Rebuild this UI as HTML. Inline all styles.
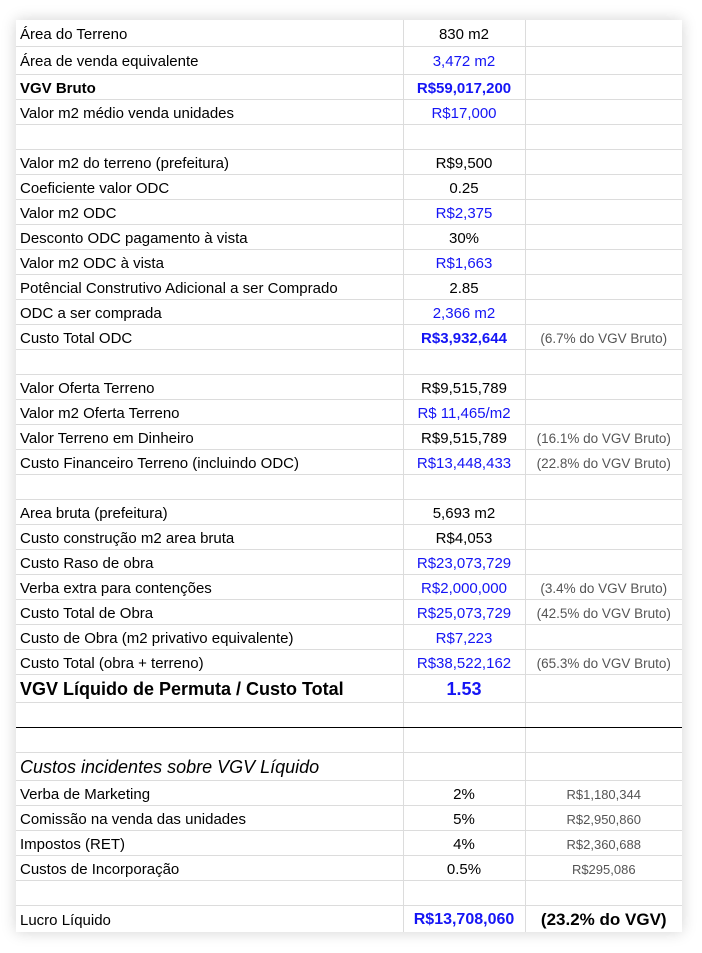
<!DOCTYPE html>
<html><head><meta charset="utf-8"><style>
body{margin:0;background:#fff;width:702px;height:953px;overflow:hidden;font-family:"Liberation Sans",sans-serif;}
.wrap{position:absolute;left:16px;top:20px;width:666px;box-shadow:0 0 14px rgba(0,0,0,0.18);background:#fff;}
table{border-collapse:collapse;width:666px;table-layout:fixed;}
td{border:1px solid #dcdcdc;height:22px;padding:2px 0 0 0;font-size:15px;color:#000;white-space:nowrap;overflow:visible;}
td:first-child{border-left:none;padding-left:4px;}
td:last-child{border-right:none;}
tr:first-child td{border-top:none;}
tr:last-child td{border-bottom:none;}
td.c{text-align:center;}
.b{color:#1515f5;}
.bb{color:#1515f5;font-weight:bold;}
.g{color:#555;font-size:13.5px;text-align:center;}
.gs{color:#555;font-size:13px;text-align:center;}
</style></head><body><div class="wrap"><table>
<colgroup><col style="width:387px"><col style="width:122px"><col style="width:157px"></colgroup>
<tr><td style="height:24px">Área do Terreno</td><td class="c">830 m2</td><td></td></tr>
<tr><td style="height:25px">Área de venda equivalente</td><td class="c b">3,472 m2</td><td></td></tr>
<tr><td><b>VGV Bruto</b></td><td class="c bb">R$59,017,200</td><td></td></tr>
<tr><td>Valor m2 médio venda unidades</td><td class="c b">R$17,000</td><td></td></tr>
<tr><td></td><td></td><td></td></tr>
<tr><td>Valor m2 do terreno (prefeitura)</td><td class="c">R$9,500</td><td></td></tr>
<tr><td>Coeficiente valor ODC</td><td class="c">0.25</td><td></td></tr>
<tr><td>Valor m2 ODC</td><td class="c b">R$2,375</td><td></td></tr>
<tr><td>Desconto ODC pagamento à vista</td><td class="c">30%</td><td></td></tr>
<tr><td>Valor m2 ODC à vista</td><td class="c b">R$1,663</td><td></td></tr>
<tr><td>Potêncial Construtivo Adicional a ser Comprado</td><td class="c">2.85</td><td></td></tr>
<tr><td>ODC a ser comprada</td><td class="c b">2,366 m2</td><td></td></tr>
<tr><td>Custo Total ODC</td><td class="c bb">R$3,932,644</td><td class="g">(6.7% do VGV Bruto)</td></tr>
<tr><td></td><td></td><td></td></tr>
<tr><td>Valor Oferta Terreno</td><td class="c">R$9,515,789</td><td></td></tr>
<tr><td>Valor m2 Oferta Terreno</td><td class="c b">R$ 11,465/m2</td><td></td></tr>
<tr><td>Valor Terreno em Dinheiro</td><td class="c">R$9,515,789</td><td class="g">(16.1% do VGV Bruto)</td></tr>
<tr><td>Custo Financeiro Terreno (incluindo ODC)</td><td class="c b">R$13,448,433</td><td class="g">(22.8% do VGV Bruto)</td></tr>
<tr><td></td><td></td><td></td></tr>
<tr><td>Area bruta (prefeitura)</td><td class="c">5,693 m2</td><td></td></tr>
<tr><td>Custo construção m2 area bruta</td><td class="c">R$4,053</td><td></td></tr>
<tr><td>Custo Raso de obra</td><td class="c b">R$23,073,729</td><td></td></tr>
<tr><td>Verba extra para contenções</td><td class="c b">R$2,000,000</td><td class="g">(3.4% do VGV Bruto)</td></tr>
<tr><td>Custo Total de Obra</td><td class="c b">R$25,073,729</td><td class="g">(42.5% do VGV Bruto)</td></tr>
<tr><td>Custo de Obra (m2 privativo equivalente)</td><td class="c b">R$7,223</td><td></td></tr>
<tr><td>Custo Total (obra + terreno)</td><td class="c b">R$38,522,162</td><td class="g">(65.3% do VGV Bruto)</td></tr>
<tr><td style="height:25px;font-size:18px;font-weight:bold">VGV Líquido de Permuta / Custo Total</td><td class="c bb" style="font-size:18px">1.53</td><td></td></tr>
<tr><td style="border-bottom:1.5px solid #000"></td><td style="border-bottom:1.5px solid #000"></td><td style="border-bottom:1.5px solid #000"></td></tr>
<tr><td></td><td></td><td></td></tr>
<tr><td style="height:25px;font-size:18px;font-style:italic">Custos incidentes sobre VGV Líquido</td><td></td><td></td></tr>
<tr><td>Verba de Marketing</td><td class="c">2%</td><td class="gs">R$1,180,344</td></tr>
<tr><td>Comissão na venda das unidades</td><td class="c">5%</td><td class="gs">R$2,950,860</td></tr>
<tr><td>Impostos (RET)</td><td class="c">4%</td><td class="gs">R$2,360,688</td></tr>
<tr><td>Custos de Incorporação</td><td class="c">0.5%</td><td class="gs">R$295,086</td></tr>
<tr><td></td><td></td><td></td></tr>
<tr><td style="height:24px">Lucro Líquido</td><td class="c bb" style="font-size:16px">R$13,708,060</td><td class="c" style="font-weight:bold;font-size:17px">(23.2% do VGV)</td></tr>
</table></div></body></html>
